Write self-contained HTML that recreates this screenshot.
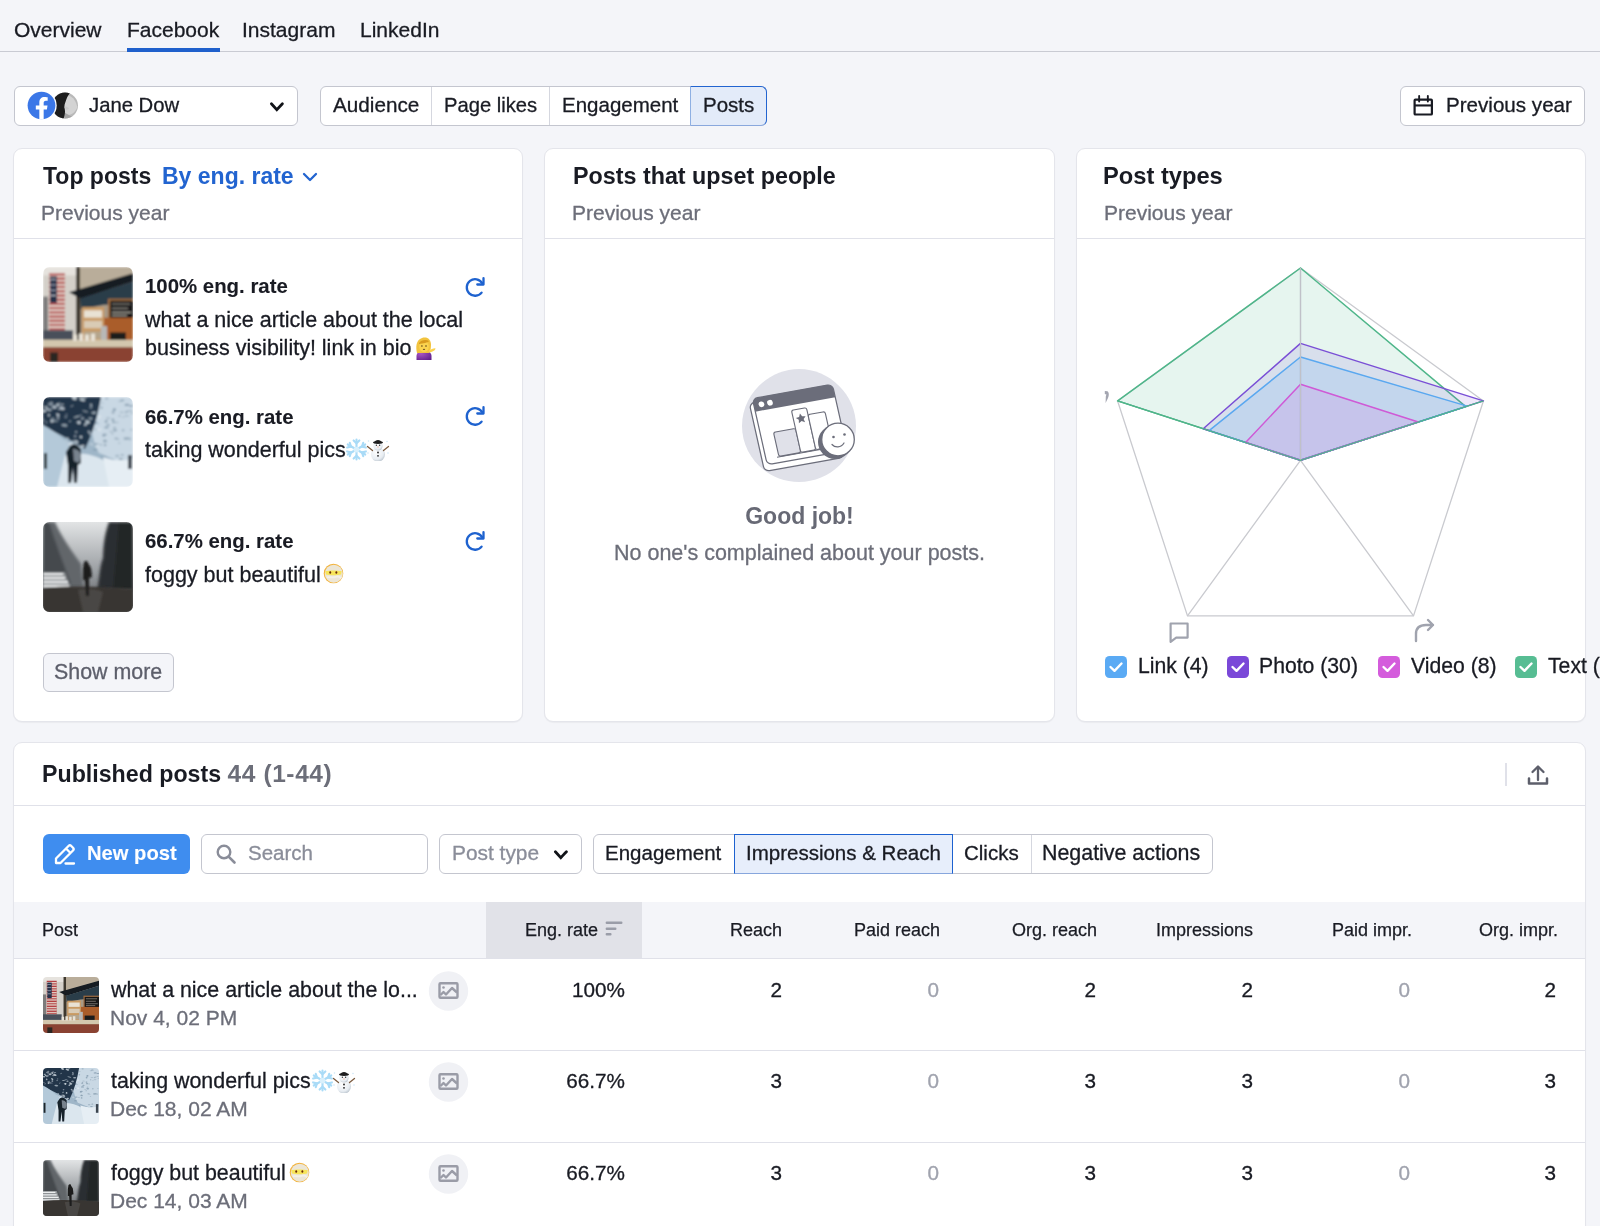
<!DOCTYPE html>
<html><head><meta charset="utf-8">
<style>
*{box-sizing:border-box;margin:0;padding:0}
html,body{width:1600px;height:1226px;overflow:hidden;background:#f4f5f9;font-family:"Liberation Sans",sans-serif;color:#191b23}
.a{position:absolute;white-space:nowrap;will-change:transform}
.t{font-size:20.5px;line-height:24px;-webkit-text-stroke:.3px currentColor}
.b{-webkit-text-stroke:.1px currentColor}
.h{font-size:23px;line-height:28px;font-weight:700}
.b{font-weight:700}
.g{color:#6c6e79}
.card{position:absolute;background:#fff;border:1px solid #e4e5eb;border-radius:9px;box-shadow:0 1px 1px rgba(25,27,35,.04)}
.hr{position:absolute;height:1px;background:#e0e1e9}
.box{position:absolute;border:1px solid #c4c6cf;border-radius:6px;background:#fff}
.vd{position:absolute;width:1px;background:#d5d7df}
.thumb{position:absolute;border-radius:7px;overflow:hidden}
svg{position:absolute;overflow:visible}
</style></head>
<body>
<!-- tabs -->
<div class="a t" style="left:14px;top:18px;font-size:21px">Overview</div>
<div class="a t" style="left:127px;top:18px;font-size:21px">Facebook</div>
<div class="a t" style="left:242px;top:18px;font-size:21px">Instagram</div>
<div class="a t" style="left:360px;top:18px;font-size:21px">LinkedIn</div>
<div class="hr" style="left:0;top:51px;width:1600px;background:#c9cbd3"></div>
<div class="a" style="left:127px;top:48px;width:93px;height:4px;background:#1f60cc"></div>

<!-- account select -->
<div class="box" style="left:14px;top:86px;width:284px;height:40px"></div>
<svg style="left:50px;top:92px" width="28" height="28" viewBox="0 0 28 28">
  <defs><clipPath id="av"><circle cx="15" cy="13.6" r="13"/></clipPath></defs>
  <g clip-path="url(#av)">
   <rect width="28" height="28" fill="#b9b9b9"/>
   <path d="M14 3 C19 2 24 6 26 11 L27.5 15 C26 19 23 22 19 23 C16 22 13 19 12 16 C12 11 12 7 14 3 Z" fill="#d3d3d3"/>
   <path d="M15 21 C18 23 21 24 25 26 L24 28 H14 Z" fill="#a4a4a4"/>
   <path d="M0 0 H21 C19 2 17.5 4 16.5 7 C15.5 10 14 13 14.5 16 C15.5 19 15 24 13 28 H0 Z" fill="#1d1d1d"/>
   <path d="M14.5 15 C16 14 18 15 19 17 L16 18 Z" fill="#c7c7c7"/>
  </g>
</svg>
<svg style="left:26px;top:90px" width="31" height="31" viewBox="-60 -60 1144 1144">
  <circle cx="512" cy="512" r="560" fill="#fff"/>
  <circle cx="512" cy="512" r="512" fill="#3b77e7"/>
  <path d="M711.3,660,734,512H592V415.96C592,375.47,611.84,336,675.44,336H740V210s-58.59-10-114.61-10C508.44,200,432,270.88,432,399.2V512H302V660H432v357.78a517.396,517.396,0,0,0,160,0V660Z" fill="#fff"/>
</svg>
<div class="a t" style="left:89px;top:93px;font-size:20.3px">Jane Dow</div>
<svg style="left:268px;top:101px" width="18" height="12" viewBox="0 0 18 12">
  <path d="M3.4 2.8 L8.8 8.6 L14.4 2.8" fill="none" stroke="#111318" stroke-width="2.8" stroke-linecap="round" stroke-linejoin="miter"/>
</svg>

<!-- segmented -->
<div class="box" style="left:320px;top:86px;width:447px;height:40px"></div>
<div class="vd" style="left:431px;top:87px;height:38px"></div>
<div class="vd" style="left:549px;top:87px;height:38px"></div>
<div class="a" style="left:690px;top:86px;width:77px;height:40px;background:#e3ebf9;border:1px solid #2264d0;border-color:#2264d0 #2264d0 #8aa8dd #8fb0e3;border-radius:0 6px 6px 0"></div>
<div class="a t" style="left:333px;top:93px;font-size:20.7px">Audience</div>
<div class="a t" style="left:444px;top:93px;font-size:20.2px">Page likes</div>
<div class="a t" style="left:562px;top:93px;font-size:20.5px">Engagement</div>
<div class="a t" style="left:703px;top:93px;font-size:20.5px">Posts</div>

<!-- previous year btn -->
<div class="box" style="left:1400px;top:86px;width:185px;height:40px"></div>
<svg style="left:1412px;top:93px" width="24" height="24" viewBox="0 0 24 24">
  <rect x="2.6" y="6.6" width="17.3" height="14.9" rx=".8" fill="none" stroke="#191b23" stroke-width="2.2"/>
  <rect x="2.6" y="11.4" width="17.3" height="2.1" fill="#191b23"/>
  <rect x="6.2" y="2" width="1.9" height="7.5" rx=".9" fill="#191b23"/>
  <rect x="14.9" y="2" width="1.9" height="7.5" rx=".9" fill="#191b23"/>
</svg>
<div class="a t" style="left:1446px;top:93px;font-size:20.6px">Previous year</div>

<!-- cards -->
<div class="card" style="left:13px;top:148px;width:510px;height:574px"></div>
<div class="card" style="left:544px;top:148px;width:511px;height:574px"></div>
<div class="card" style="left:1076px;top:148px;width:510px;height:574px"></div>
<div class="card" style="left:13px;top:742px;width:1573px;height:500px"></div>
<svg width="0" height="0" style="position:absolute"><defs>
<filter id="soft" x="-5%" y="-5%" width="110%" height="110%"><feGaussianBlur stdDeviation="0.9"/></filter>
<filter id="soft2" x="-5%" y="-5%" width="110%" height="110%"><feGaussianBlur stdDeviation="1.6"/></filter>
<pattern id="stripes" width="90" height="4" patternUnits="userSpaceOnUse"><rect width="90" height="2" fill="#e3d9d0"/></pattern>
<linearGradient id="fog" x1="0" y1="0" x2="0" y2="1"><stop offset="0" stop-color="#e2e4e5"/><stop offset=".55" stop-color="#9a9ea2"/><stop offset="1" stop-color="#55585b"/></linearGradient>
<linearGradient id="snowpath" x1="0" y1="0" x2="1" y2="1"><stop offset="0" stop-color="#a8bfd0"/><stop offset="1" stop-color="#e6eef4"/></linearGradient>
<symbol id="th1" viewBox="0 0 90 90" preserveAspectRatio="none">
  <clipPath id="c1"><rect width="90" height="90" rx="6.5"/></clipPath>
  <g clip-path="url(#c1)"><g filter="url(#soft)">
   <rect width="90" height="90" fill="#a89a86"/>
   <rect x="0" y="0" width="36" height="72" fill="#d4d0c9"/>
   <rect x="0" y="0" width="36" height="8" fill="#e6e3de"/>
   <rect x="0" y="28" width="5" height="40" fill="#7d7c7b"/>
   <rect x="33" y="0" width="4.5" height="72" fill="#3d372f"/>
   <rect x="37" y="0" width="53" height="22" fill="#b9ad9a"/>
   <rect x="6" y="6" width="16" height="56" fill="#b13a3c"/>
   <rect x="6" y="6" width="16" height="56" fill="url(#stripes)"/>
   <rect x="7" y="9" width="7" height="25" fill="#26304a"/>
   <path d="M7 12 H13 M7 17 H13 M7 22 H13 M7 27 H13" stroke="#c9ccd6" stroke-width=".9"/>
   <path d="M26 24 L90 6 L90 14 L38 30 Z" fill="#121a22"/>
   <path d="M37 30 L90 14 L90 34 L60 36 L38 40 Z" fill="#2a3c4a"/>
   <rect x="39" y="38" width="22" height="34" fill="#c99a63"/>
   <rect x="41" y="41" width="18" height="7" fill="#e9e2d4"/>
   <rect x="41" y="51" width="18" height="7" fill="#d9cbb5"/>
   <rect x="41" y="61" width="18" height="7" fill="#b5a58c"/>
   <rect x="65" y="30" width="25" height="20" fill="#9b6a3f"/>
   <rect x="67" y="32" width="23" height="17" fill="#151616"/>
   <path d="M69 35 H87 M69 39 H85 M69 43 H88 M69 46 H84" stroke="#a9a49a" stroke-width="1"/>
   <rect x="61" y="48" width="29" height="26" fill="#aa5d2c"/>
   <rect x="58" y="56" width="6" height="18" fill="#b8b8b6"/>
   <rect x="67" y="62" width="16" height="13" fill="#1c1c1c"/>
   <rect x="0" y="60" width="30" height="9" fill="#48505a"/>
   <rect x="0" y="69" width="90" height="7" fill="#d3c7ae"/>
   <path d="M30 64 h4 v6 h-4 Z M36 63 h4 v7 h-4 Z M42 64 h4 v6 h-4 Z M48 63 h4 v7 h-4 Z" fill="#e8e2d6"/>
   <rect x="0" y="76" width="90" height="14" fill="#8a4330"/>
   <rect x="7" y="81" width="8" height="9" fill="#2b2522"/>
  </g></g>
</symbol>
<symbol id="th2" viewBox="0 0 90 90" preserveAspectRatio="none">
  <clipPath id="c2"><rect width="90" height="90" rx="6.5"/></clipPath>
  <g clip-path="url(#c2)"><g filter="url(#soft)">
   <rect width="90" height="90" fill="#9fb6c8"/>
   <path d="M50 0 H90 V70 C80 66 66 60 56 56 C48 42 46 20 50 0 Z" fill="#c9d8e4"/>
   <ellipse cx="63.8" cy="23.5" rx="1.0" ry="0.8" fill="#5f7a90" opacity="0.42"/><ellipse cx="71.1" cy="13.3" rx="1.8" ry="0.5" fill="#5f7a90" opacity="0.34"/><ellipse cx="55.4" cy="26.4" rx="1.1" ry="0.5" fill="#5f7a90" opacity="0.36"/><ellipse cx="60.8" cy="38.6" rx="1.8" ry="1.1" fill="#5f7a90" opacity="0.48"/><ellipse cx="79.2" cy="58.0" rx="1.6" ry="0.8" fill="#5f7a90" opacity="0.59"/><ellipse cx="57.7" cy="47.8" rx="2.0" ry="0.5" fill="#5f7a90" opacity="0.54"/><ellipse cx="85.9" cy="41.4" rx="2.2" ry="1.1" fill="#5f7a90" opacity="0.30"/><ellipse cx="71.9" cy="33.3" rx="2.3" ry="1.1" fill="#5f7a90" opacity="0.54"/><ellipse cx="74.2" cy="58.9" rx="2.1" ry="1.1" fill="#5f7a90" opacity="0.33"/><ellipse cx="53.2" cy="8.8" rx="1.6" ry="0.6" fill="#5f7a90" opacity="0.54"/><ellipse cx="73.2" cy="41.4" rx="2.0" ry="1.0" fill="#5f7a90" opacity="0.42"/><ellipse cx="52.1" cy="52.6" rx="2.2" ry="0.9" fill="#5f7a90" opacity="0.44"/><ellipse cx="77.1" cy="4.4" rx="2.2" ry="0.7" fill="#5f7a90" opacity="0.28"/><ellipse cx="62.1" cy="48.1" rx="1.3" ry="1.1" fill="#5f7a90" opacity="0.59"/><ellipse cx="70.8" cy="25.2" rx="1.8" ry="1.0" fill="#5f7a90" opacity="0.52"/><ellipse cx="75.4" cy="42.4" rx="1.1" ry="0.6" fill="#5f7a90" opacity="0.34"/><ellipse cx="80.2" cy="20.1" rx="1.9" ry="0.5" fill="#5f7a90" opacity="0.27"/><ellipse cx="62.2" cy="44.4" rx="2.1" ry="1.0" fill="#5f7a90" opacity="0.35"/><ellipse cx="71.6" cy="30.7" rx="1.7" ry="0.6" fill="#5f7a90" opacity="0.56"/><ellipse cx="59.6" cy="64.6" rx="2.5" ry="0.5" fill="#5f7a90" opacity="0.41"/><ellipse cx="83.2" cy="63.9" rx="1.7" ry="0.7" fill="#5f7a90" opacity="0.32"/><ellipse cx="87.9" cy="13.9" rx="1.9" ry="0.6" fill="#5f7a90" opacity="0.43"/><ellipse cx="88.2" cy="8.8" rx="2.3" ry="0.9" fill="#5f7a90" opacity="0.56"/><ellipse cx="78.7" cy="15.3" rx="2.4" ry="0.9" fill="#5f7a90" opacity="0.26"/><ellipse cx="52.1" cy="32.5" rx="1.7" ry="0.7" fill="#5f7a90" opacity="0.30"/><ellipse cx="65.1" cy="20.9" rx="2.3" ry="0.5" fill="#5f7a90" opacity="0.51"/><ellipse cx="83.9" cy="7.9" rx="2.5" ry="1.1" fill="#5f7a90" opacity="0.57"/><ellipse cx="63.0" cy="24.6" rx="1.6" ry="1.3" fill="#5f7a90" opacity="0.46"/><ellipse cx="65.7" cy="28.3" rx="1.4" ry="0.5" fill="#5f7a90" opacity="0.29"/><ellipse cx="83.7" cy="18.9" rx="2.5" ry="0.7" fill="#5f7a90" opacity="0.34"/><ellipse cx="71.4" cy="12.5" rx="1.6" ry="1.3" fill="#5f7a90" opacity="0.56"/><ellipse cx="82.9" cy="41.6" rx="2.5" ry="1.3" fill="#5f7a90" opacity="0.44"/><ellipse cx="79.3" cy="3.3" rx="2.2" ry="0.9" fill="#5f7a90" opacity="0.51"/><ellipse cx="76.5" cy="18.9" rx="1.1" ry="1.2" fill="#5f7a90" opacity="0.29"/><ellipse cx="69.9" cy="22.7" rx="1.5" ry="1.1" fill="#5f7a90" opacity="0.59"/><ellipse cx="61.9" cy="43.3" rx="1.5" ry="0.9" fill="#5f7a90" opacity="0.39"/><ellipse cx="58.4" cy="10.7" rx="1.3" ry="1.2" fill="#5f7a90" opacity="0.42"/><ellipse cx="60.4" cy="59.8" rx="2.6" ry="0.9" fill="#5f7a90" opacity="0.30"/><ellipse cx="59.3" cy="6.0" rx="1.5" ry="0.6" fill="#5f7a90" opacity="0.33"/><ellipse cx="61.8" cy="37.6" rx="2.4" ry="1.1" fill="#5f7a90" opacity="0.39"/><ellipse cx="67.7" cy="34.6" rx="1.6" ry="0.8" fill="#5f7a90" opacity="0.27"/><ellipse cx="62.5" cy="63.9" rx="1.2" ry="0.9" fill="#5f7a90" opacity="0.47"/><ellipse cx="84.8" cy="14.3" rx="1.4" ry="0.7" fill="#5f7a90" opacity="0.39"/><ellipse cx="68.9" cy="63.0" rx="2.4" ry="1.2" fill="#5f7a90" opacity="0.26"/><ellipse cx="53.2" cy="46.8" rx="2.4" ry="0.9" fill="#5f7a90" opacity="0.46"/><ellipse cx="52.0" cy="25.8" rx="2.5" ry="1.2" fill="#5f7a90" opacity="0.55"/><ellipse cx="88.9" cy="16.4" rx="1.2" ry="0.6" fill="#5f7a90" opacity="0.43"/><ellipse cx="77.9" cy="62.1" rx="2.2" ry="1.0" fill="#5f7a90" opacity="0.52"/><ellipse cx="69.4" cy="36.4" rx="1.1" ry="1.1" fill="#5f7a90" opacity="0.33"/><ellipse cx="87.0" cy="42.6" rx="1.5" ry="0.6" fill="#5f7a90" opacity="0.34"/><ellipse cx="76.2" cy="46.1" rx="1.2" ry="0.6" fill="#5f7a90" opacity="0.43"/><ellipse cx="74.1" cy="25.6" rx="1.4" ry="1.0" fill="#5f7a90" opacity="0.25"/><ellipse cx="63.5" cy="30.4" rx="2.5" ry="1.0" fill="#5f7a90" opacity="0.56"/><ellipse cx="70.1" cy="15.5" rx="1.4" ry="1.3" fill="#5f7a90" opacity="0.50"/><ellipse cx="63.7" cy="1.4" rx="1.8" ry="1.0" fill="#5f7a90" opacity="0.40"/><ellipse cx="61.8" cy="44.0" rx="2.5" ry="0.7" fill="#5f7a90" opacity="0.26"/><ellipse cx="64.8" cy="27.8" rx="2.1" ry="0.7" fill="#5f7a90" opacity="0.53"/><ellipse cx="80.1" cy="33.3" rx="1.3" ry="1.3" fill="#5f7a90" opacity="0.36"/><ellipse cx="83.2" cy="15.2" rx="1.4" ry="1.1" fill="#5f7a90" opacity="0.35"/><ellipse cx="88.2" cy="32.7" rx="1.3" ry="0.7" fill="#5f7a90" opacity="0.40"/>
   <path d="M0 0 H58 C55 18 50 36 42 52 C32 46 16 36 0 30 Z" fill="#23364a"/>
   <ellipse cx="18.8" cy="7.5" rx="2.5" ry="0.7" transform="rotate(-8 18.8 7.5)" fill="#dfe8ee" opacity="0.59"/><ellipse cx="3.4" cy="25.4" rx="1.3" ry="1.0" transform="rotate(-25 3.4 25.4)" fill="#dfe8ee" opacity="0.38"/><ellipse cx="24.6" cy="41.3" rx="1.4" ry="0.8" transform="rotate(27 24.6 41.3)" fill="#dfe8ee" opacity="0.63"/><ellipse cx="33.5" cy="19.8" rx="3.2" ry="0.6" transform="rotate(-13 33.5 19.8)" fill="#dfe8ee" opacity="0.74"/><ellipse cx="8.4" cy="5.9" rx="1.8" ry="1.4" transform="rotate(5 8.4 5.9)" fill="#dfe8ee" opacity="0.43"/><ellipse cx="37.1" cy="18.6" rx="2.3" ry="0.7" transform="rotate(-18 37.1 18.6)" fill="#dfe8ee" opacity="0.38"/><ellipse cx="39.5" cy="21.4" rx="1.8" ry="1.2" transform="rotate(-12 39.5 21.4)" fill="#dfe8ee" opacity="0.55"/><ellipse cx="46.1" cy="34.9" rx="1.7" ry="1.2" transform="rotate(23 46.1 34.9)" fill="#dfe8ee" opacity="0.59"/><ellipse cx="42.3" cy="14.4" rx="3.2" ry="0.7" transform="rotate(15 42.3 14.4)" fill="#dfe8ee" opacity="0.54"/><ellipse cx="8.8" cy="24.4" rx="1.3" ry="1.3" transform="rotate(4 8.8 24.4)" fill="#dfe8ee" opacity="0.69"/><ellipse cx="50.8" cy="15.7" rx="2.6" ry="1.2" transform="rotate(-3 50.8 15.7)" fill="#dfe8ee" opacity="0.61"/><ellipse cx="48.7" cy="47.2" rx="2.1" ry="1.3" transform="rotate(12 48.7 47.2)" fill="#dfe8ee" opacity="0.38"/><ellipse cx="37.5" cy="49.7" rx="2.8" ry="0.9" transform="rotate(10 37.5 49.7)" fill="#dfe8ee" opacity="0.52"/><ellipse cx="1.3" cy="23.1" rx="1.5" ry="0.7" transform="rotate(16 1.3 23.1)" fill="#dfe8ee" opacity="0.38"/><ellipse cx="7.5" cy="12.4" rx="2.0" ry="1.5" transform="rotate(-3 7.5 12.4)" fill="#dfe8ee" opacity="0.39"/><ellipse cx="31.9" cy="44.2" rx="2.8" ry="1.5" transform="rotate(-5 31.9 44.2)" fill="#dfe8ee" opacity="0.48"/><ellipse cx="20.8" cy="44.2" rx="3.1" ry="0.8" transform="rotate(-16 20.8 44.2)" fill="#dfe8ee" opacity="0.43"/><ellipse cx="13.5" cy="24.2" rx="2.4" ry="0.9" transform="rotate(-5 13.5 24.2)" fill="#dfe8ee" opacity="0.35"/><ellipse cx="21.4" cy="28.3" rx="3.1" ry="1.3" transform="rotate(7 21.4 28.3)" fill="#dfe8ee" opacity="0.58"/><ellipse cx="39.2" cy="2.7" rx="3.0" ry="1.4" transform="rotate(18 39.2 2.7)" fill="#dfe8ee" opacity="0.74"/><ellipse cx="22.8" cy="19.9" rx="1.4" ry="1.2" transform="rotate(-26 22.8 19.9)" fill="#dfe8ee" opacity="0.38"/><ellipse cx="12.1" cy="8.1" rx="1.9" ry="0.7" transform="rotate(-21 12.1 8.1)" fill="#dfe8ee" opacity="0.35"/><ellipse cx="5.9" cy="18.2" rx="1.3" ry="1.5" transform="rotate(-21 5.9 18.2)" fill="#dfe8ee" opacity="0.63"/><ellipse cx="14.6" cy="17.4" rx="1.9" ry="0.7" transform="rotate(30 14.6 17.4)" fill="#dfe8ee" opacity="0.73"/><ellipse cx="27.0" cy="24.2" rx="1.4" ry="0.7" transform="rotate(-14 27.0 24.2)" fill="#dfe8ee" opacity="0.50"/><ellipse cx="48.1" cy="8.1" rx="1.2" ry="1.6" transform="rotate(-21 48.1 8.1)" fill="#dfe8ee" opacity="0.59"/><ellipse cx="31.5" cy="1.4" rx="2.3" ry="1.6" transform="rotate(12 31.5 1.4)" fill="#dfe8ee" opacity="0.74"/><ellipse cx="15.1" cy="18.3" rx="1.5" ry="1.4" transform="rotate(17 15.1 18.3)" fill="#dfe8ee" opacity="0.59"/><ellipse cx="19.1" cy="11.2" rx="2.8" ry="1.6" transform="rotate(18 19.1 11.2)" fill="#dfe8ee" opacity="0.73"/><ellipse cx="47.5" cy="37.0" rx="1.7" ry="1.1" transform="rotate(-28 47.5 37.0)" fill="#dfe8ee" opacity="0.51"/><ellipse cx="1.6" cy="14.0" rx="1.7" ry="1.3" transform="rotate(-3 1.6 14.0)" fill="#dfe8ee" opacity="0.78"/><ellipse cx="54.3" cy="49.4" rx="3.1" ry="1.0" transform="rotate(-16 54.3 49.4)" fill="#dfe8ee" opacity="0.45"/><ellipse cx="11.4" cy="10.2" rx="2.4" ry="1.5" transform="rotate(-1 11.4 10.2)" fill="#dfe8ee" opacity="0.73"/><ellipse cx="37.9" cy="40.0" rx="1.4" ry="1.3" transform="rotate(17 37.9 40.0)" fill="#dfe8ee" opacity="0.76"/><ellipse cx="43.5" cy="23.9" rx="1.6" ry="1.4" transform="rotate(18 43.5 23.9)" fill="#dfe8ee" opacity="0.50"/><ellipse cx="56.4" cy="19.8" rx="2.0" ry="1.5" transform="rotate(-20 56.4 19.8)" fill="#dfe8ee" opacity="0.68"/><ellipse cx="7.4" cy="7.6" rx="3.0" ry="1.4" transform="rotate(20 7.4 7.6)" fill="#dfe8ee" opacity="0.42"/><ellipse cx="56.9" cy="32.9" rx="1.9" ry="1.1" transform="rotate(-29 56.9 32.9)" fill="#dfe8ee" opacity="0.41"/><ellipse cx="56.3" cy="32.5" rx="2.3" ry="1.5" transform="rotate(22 56.3 32.5)" fill="#dfe8ee" opacity="0.55"/><ellipse cx="47.9" cy="10.6" rx="1.7" ry="0.9" transform="rotate(5 47.9 10.6)" fill="#dfe8ee" opacity="0.46"/><ellipse cx="15.0" cy="21.0" rx="1.5" ry="1.5" transform="rotate(-3 15.0 21.0)" fill="#dfe8ee" opacity="0.51"/><ellipse cx="33.8" cy="45.2" rx="2.0" ry="1.5" transform="rotate(2 33.8 45.2)" fill="#dfe8ee" opacity="0.58"/><ellipse cx="30.4" cy="0.9" rx="2.1" ry="0.8" transform="rotate(18 30.4 0.9)" fill="#dfe8ee" opacity="0.35"/><ellipse cx="10.0" cy="23.7" rx="2.7" ry="1.2" transform="rotate(1 10.0 23.7)" fill="#dfe8ee" opacity="0.50"/><ellipse cx="32.2" cy="39.2" rx="1.4" ry="1.2" transform="rotate(-13 32.2 39.2)" fill="#dfe8ee" opacity="0.46"/><ellipse cx="44.8" cy="25.4" rx="2.3" ry="1.4" transform="rotate(-3 44.8 25.4)" fill="#dfe8ee" opacity="0.76"/><ellipse cx="35.5" cy="25.3" rx="2.2" ry="1.3" transform="rotate(2 35.5 25.3)" fill="#dfe8ee" opacity="0.55"/><ellipse cx="27.7" cy="47.1" rx="2.6" ry="1.5" transform="rotate(-14 27.7 47.1)" fill="#dfe8ee" opacity="0.77"/><ellipse cx="32.5" cy="47.2" rx="2.9" ry="0.7" transform="rotate(-3 32.5 47.2)" fill="#dfe8ee" opacity="0.40"/><ellipse cx="4.2" cy="12.0" rx="1.3" ry="1.3" transform="rotate(24 4.2 12.0)" fill="#dfe8ee" opacity="0.70"/><ellipse cx="9.0" cy="35.8" rx="2.5" ry="0.7" transform="rotate(28 9.0 35.8)" fill="#dfe8ee" opacity="0.75"/><ellipse cx="12.7" cy="47.6" rx="2.0" ry="1.1" transform="rotate(20 12.7 47.6)" fill="#dfe8ee" opacity="0.80"/><ellipse cx="9.4" cy="21.6" rx="2.2" ry="0.9" transform="rotate(-11 9.4 21.6)" fill="#dfe8ee" opacity="0.44"/><ellipse cx="41.9" cy="1.0" rx="2.3" ry="1.0" transform="rotate(-10 41.9 1.0)" fill="#dfe8ee" opacity="0.36"/><ellipse cx="36.2" cy="25.6" rx="1.3" ry="1.6" transform="rotate(28 36.2 25.6)" fill="#dfe8ee" opacity="0.70"/><ellipse cx="6.1" cy="13.3" rx="1.3" ry="1.4" transform="rotate(-22 6.1 13.3)" fill="#dfe8ee" opacity="0.47"/><ellipse cx="24.5" cy="45.6" rx="2.8" ry="0.9" transform="rotate(25 24.5 45.6)" fill="#dfe8ee" opacity="0.42"/><ellipse cx="33.1" cy="35.0" rx="1.4" ry="0.7" transform="rotate(-4 33.1 35.0)" fill="#dfe8ee" opacity="0.66"/><ellipse cx="4.2" cy="46.9" rx="2.5" ry="1.4" transform="rotate(21 4.2 46.9)" fill="#dfe8ee" opacity="0.39"/><ellipse cx="3.9" cy="43.1" rx="2.1" ry="0.9" transform="rotate(26 3.9 43.1)" fill="#dfe8ee" opacity="0.60"/><ellipse cx="15.5" cy="6.5" rx="2.3" ry="0.8" transform="rotate(-20 15.5 6.5)" fill="#dfe8ee" opacity="0.40"/><ellipse cx="2.9" cy="10.1" rx="1.8" ry="0.9" transform="rotate(-13 2.9 10.1)" fill="#dfe8ee" opacity="0.69"/><ellipse cx="29.0" cy="8.9" rx="1.9" ry="0.6" transform="rotate(-29 29.0 8.9)" fill="#dfe8ee" opacity="0.46"/><ellipse cx="42.5" cy="27.6" rx="1.6" ry="1.1" transform="rotate(-24 42.5 27.6)" fill="#dfe8ee" opacity="0.77"/><ellipse cx="47.5" cy="21.6" rx="2.2" ry="1.4" transform="rotate(0 47.5 21.6)" fill="#dfe8ee" opacity="0.53"/><ellipse cx="39.9" cy="49.1" rx="1.9" ry="1.4" transform="rotate(8 39.9 49.1)" fill="#dfe8ee" opacity="0.67"/><ellipse cx="23.5" cy="17.4" rx="1.3" ry="0.7" transform="rotate(14 23.5 17.4)" fill="#dfe8ee" opacity="0.38"/><ellipse cx="14.8" cy="8.2" rx="1.4" ry="1.4" transform="rotate(10 14.8 8.2)" fill="#dfe8ee" opacity="0.74"/><ellipse cx="16.4" cy="12.1" rx="1.8" ry="1.1" transform="rotate(-3 16.4 12.1)" fill="#dfe8ee" opacity="0.42"/><ellipse cx="15.3" cy="48.1" rx="3.1" ry="1.1" transform="rotate(28 15.3 48.1)" fill="#dfe8ee" opacity="0.46"/>
   <path d="M0 28 C12 34 24 44 32 56 L28 90 H0 Z" fill="#b4c9d9"/>
   <path d="M22 58 C38 54 52 58 62 64 C72 70 82 72 90 72 V90 H14 Z" fill="#dbe6ee"/>
   <path d="M60 60 C70 64 80 64 90 62 V90 H66 Z" fill="#e6eef4"/>
   <rect x="1" y="56" width="3" height="16" fill="#1e252c"/>
   <rect x="85" y="58" width="4" height="14" fill="#3a4450"/>
   <path d="M25 52 C27 47 32 46 35 49 L38 52 L38 66 L35 68 L34 86 L31 86 L30 70 L28 86 L25 86 L25 68 L23 55 Z" fill="#18202b"/>
   <path d="M30 52 C34 52 38 54 38 60 L36 66 L31 64 Z" fill="#78838e"/>
  </g></g>
</symbol>
<symbol id="th3" viewBox="0 0 90 90" preserveAspectRatio="none">
  <clipPath id="c3"><rect width="90" height="90" rx="6.5"/></clipPath>
  <g clip-path="url(#c3)">
   <rect width="90" height="90" fill="url(#fog)"/>
   <g filter="url(#soft2)">
   <path d="M0 0 H12 C18 14 28 28 38 42 L40 66 H0 Z" fill="#62666a"/>
   <path d="M0 0 H6 C12 20 20 40 28 62 H0 Z" fill="#45494d"/>
   <path d="M66 0 H90 V68 H54 C57 56 56 46 60 36 C60 24 62 10 66 0 Z" fill="#2c2f32"/>
   <path d="M76 0 H90 V68 H70 Z" fill="#232628"/>
   </g>
   <g filter="url(#soft)">
   <path d="M0 50 H22 L28 66 H0 Z" fill="#8f9396"/>
   <path d="M0 52 H20 M0 56 H22 M0 60 H25 M0 64 H26" stroke="#eceeef" stroke-width="2.2"/>
   <path d="M0 66 C30 63 60 65 90 67 V90 H0 Z" fill="#393531"/>
   <path d="M35 68 C42 66 52 66 60 70 L55 90 H40 Z" fill="#4a4744"/>
   <path d="M41 40 C43 38 45 39 45 41 L48 46 L49 55 L46 56 L46 74 L43 74 L42 58 L40 58 L40 47 Z" fill="#1a1a1a"/>
   </g>
  </g>
</symbol>
</defs></svg>
<svg width="0" height="0" style="position:absolute"><defs>
<radialGradient id="snowg" cx=".4" cy=".35" r=".7"><stop offset="0" stop-color="#ffffff"/><stop offset=".7" stop-color="#e8edf2"/><stop offset="1" stop-color="#b9c3cc"/></radialGradient>
<radialGradient id="purg" cx=".3" cy=".3" r=".9"><stop offset="0" stop-color="#a755c2"/><stop offset="1" stop-color="#5e1d8a"/></radialGradient>
<symbol id="em1" viewBox="0 0 24 24">
  <path d="M3.5 24 V20 C3.5 17 6 15 11 15 C16 15 18.5 17 18.5 20 V24 Z" fill="url(#purg)"/>
  <path d="M4 17 C2.5 11 3 4 9 2 C14 0.5 18 3 18 9 C18 13 17 16 16 17 Z" fill="#f2c33e"/>
  <ellipse cx="11" cy="10.5" rx="4.8" ry="5.5" fill="#fbd34f"/>
  <path d="M6 7 C8 4 13 3 16 5 C15 7 10 7 6 8 Z" fill="#d99a1e"/>
  <circle cx="8.9" cy="10" r=".8" fill="#5a4015"/><circle cx="13" cy="10" r=".8" fill="#5a4015"/>
  <ellipse cx="11" cy="13.3" rx="1.2" ry=".6" fill="#6a4a20"/>
  <path d="M16 14.5 C18 13 20.5 12 22.5 12.2 L22 14 C20.5 15 18.5 16 17 16.5 Z" fill="#fbd34f"/>
</symbol>
<symbol id="em2" viewBox="0 0 24 24">
  <g stroke="#a9dbf7" stroke-width="2.2" stroke-linecap="round" fill="none">
   <path d="M12 1.5 V22.5 M2.9 6.75 L21.1 17.25 M2.9 17.25 L21.1 6.75"/>
   <path d="M9 2.5 L12 5.5 L15 2.5 M9 21.5 L12 18.5 L15 21.5 M2.2 10 L6.3 9 L5 5 M21.8 14 L17.7 15 L19 19 M2.2 14 L6.3 15 L5 19 M21.8 10 L17.7 9 L19 5"/>
  </g>
  <circle cx="12" cy="12" r="3" fill="#d9f0fc"/>
</symbol>
<symbol id="em3" viewBox="0 0 24 24">
  <circle cx="12" cy="17.5" r="7" fill="url(#snowg)"/>
  <circle cx="12" cy="9" r="4.6" fill="url(#snowg)"/>
  <path d="M8.5 5.5 C8.5 2 15.5 2 15.5 5.5 Z" fill="#1d1d1d"/>
  <ellipse cx="12" cy="5.6" rx="5" ry="1.3" fill="#1d1d1d"/>
  <circle cx="10.4" cy="8.3" r=".7" fill="#333"/><circle cx="13.6" cy="8.3" r=".7" fill="#333"/>
  <path d="M11.5 9.5 L12.5 9.5 L12 11 Z" fill="#e8663a"/>
  <path d="M1.5 9.5 L6.5 13.5 M22.5 9.5 L17.5 13.5" stroke="#7a5a3f" stroke-width="1.3" stroke-linecap="round"/>
  <circle cx="12" cy="15.5" r=".9" fill="#222"/><circle cx="12" cy="18.8" r=".9" fill="#222"/>
  <circle cx="2.5" cy="4" r=".8" fill="#cde6f6"/><circle cx="21" cy="4.5" r=".8" fill="#cde6f6"/><circle cx="22" cy="16" r=".8" fill="#cde6f6"/><circle cx="2" cy="16" r=".8" fill="#cde6f6"/>
</symbol>
<symbol id="em4" viewBox="0 0 24 24">
  <circle cx="12" cy="12" r="10.2" fill="#f2b23a"/>
  <circle cx="12.3" cy="12.2" r="9.4" fill="#ece6d6"/>
  <path d="M3.5 9.5 C7 8.5 17 8.5 20.5 9.5 L20 13 C16 14 8 14 4 13 Z" fill="#f7e55a"/>
  <ellipse cx="8.6" cy="11" rx="1" ry="1.3" fill="#6b2a0a"/><ellipse cx="15" cy="11" rx="1" ry="1.3" fill="#6b2a0a"/>
  <path d="M5 16 C8 15 11 17 14 15.5 C17 14.5 19 16 20 17" fill="none" stroke="#f4f0e6" stroke-width="2"/>
</symbol>
</defs></svg>
<!-- ===== card 1: top posts ===== -->
<div class="a h" style="left:43px;top:162px">Top posts</div>
<div class="a h" style="left:162px;top:162px;color:#2264d0">By eng. rate</div>
<svg style="left:301px;top:170px" width="18" height="14" viewBox="0 0 18 14">
  <path d="M3 4 L9 10 L15 4" fill="none" stroke="#2264d0" stroke-width="2.3" stroke-linecap="round" stroke-linejoin="round"/>
</svg>
<div class="a t g" style="left:41px;top:201px;font-size:21px">Previous year</div>
<div class="hr" style="left:14px;top:238px;width:508px"></div>

<!-- thumbs -->
<svg style="left:43px;top:267px" width="90" height="95" viewBox="0 0 90 90" preserveAspectRatio="none"><use href="#th1"/></svg>
<svg style="left:43px;top:397px" width="90" height="90" viewBox="0 0 90 90" preserveAspectRatio="none"><use href="#th2"/></svg>
<svg style="left:43px;top:522px" width="90" height="90" viewBox="0 0 90 90" preserveAspectRatio="none"><use href="#th3"/></svg>

<!-- post texts -->
<div class="a t b" style="left:145px;top:274px;font-size:20.4px">100% eng. rate</div>
<div class="a t" style="left:145px;top:308px;font-size:21.5px">what a nice article about the local</div>
<div class="a t" style="left:145px;top:336px;font-size:21.5px">business visibility! link in bio</div>
<div class="a t b" style="left:145px;top:405px;font-size:20.4px">66.7% eng. rate</div>
<div class="a t" style="left:145px;top:438px;font-size:21.5px">taking wonderful pics</div>
<div class="a t b" style="left:145px;top:529px;font-size:20.4px">66.7% eng. rate</div>
<div class="a t" style="left:145px;top:563px;font-size:21.5px">foggy but beautiful</div>

<!-- refresh icons -->
<svg style="left:463px;top:275px" width="24" height="24" viewBox="0 0 24 24">
  <path d="M19.2 8.2 A8.3 8.3 0 1 0 18.6 17.6" fill="none" stroke="#1e62cf" stroke-width="2.3" stroke-linecap="round"/>
  <path d="M20.5 3.2 V9.5 H14.3" fill="none" stroke="#1e62cf" stroke-width="2.3" stroke-linecap="round" stroke-linejoin="round"/>
</svg>
<svg style="left:463px;top:404px" width="24" height="24" viewBox="0 0 24 24">
  <path d="M19.2 8.2 A8.3 8.3 0 1 0 18.6 17.6" fill="none" stroke="#1e62cf" stroke-width="2.3" stroke-linecap="round"/>
  <path d="M20.5 3.2 V9.5 H14.3" fill="none" stroke="#1e62cf" stroke-width="2.3" stroke-linecap="round" stroke-linejoin="round"/>
</svg>
<svg style="left:463px;top:529px" width="24" height="24" viewBox="0 0 24 24">
  <path d="M19.2 8.2 A8.3 8.3 0 1 0 18.6 17.6" fill="none" stroke="#1e62cf" stroke-width="2.3" stroke-linecap="round"/>
  <path d="M20.5 3.2 V9.5 H14.3" fill="none" stroke="#1e62cf" stroke-width="2.3" stroke-linecap="round" stroke-linejoin="round"/>
</svg>

<!-- show more -->
<div class="a" style="left:43px;top:653px;width:131px;height:39px;background:#f4f5f9;border:1px solid #c4c6cf;border-radius:6px"></div>
<div class="a t" style="left:54px;top:660px;font-size:21.4px;color:#5d5f6b">Show more</div>
<!-- emojis -->
<svg style="left:413px;top:336px" width="24" height="24" viewBox="0 0 24 24"><use href="#em1"/></svg>
<svg style="left:345px;top:438px" width="23" height="23" viewBox="0 0 24 24"><use href="#em2"/></svg>
<svg style="left:366px;top:437px" width="24" height="24" viewBox="0 0 24 24"><use href="#em3"/></svg>
<svg style="left:322px;top:562px" width="23" height="23" viewBox="0 0 24 24"><use href="#em4"/></svg>
<!-- ===== card 2 ===== -->
<div class="a h" style="left:573px;top:162px;font-size:23.3px">Posts that upset people</div>
<div class="a t g" style="left:572px;top:201px;font-size:21px">Previous year</div>
<div class="hr" style="left:545px;top:238px;width:509px"></div>
<svg style="left:735px;top:362px" width="130" height="125" viewBox="0 0 130 125">
  <path d="M64 7 C95 7 121 33 121 64 C121 95 95 120 64 120 C33 120 7 95 7 64 C7 33 33 7 64 7 Z" fill="#e0e1e9"/>
  <g transform="matrix(0.999,-0.18,0.225,1.003,17.4,36.6)">
    <rect x="-4" y="4" width="80" height="68" rx="5" fill="#fff" stroke="#6b6d7a" stroke-width="1.2"/>
    <rect x="0" y="0" width="80" height="66" rx="5" fill="#fff" stroke="#6b6d7a" stroke-width="1.2"/>
    <path d="M0 13 V5 A5 5 0 0 1 5 0 H75 A5 5 0 0 1 80 5 V13 Z" fill="#6b6d7a"/>
    <circle cx="7.5" cy="7" r="2.8" fill="#fff"/><circle cx="16" cy="7" r="2.8" fill="#fff"/>
    <rect x="13" y="36" width="22" height="24" rx="2" fill="#e0e1e9" stroke="#6b6d7a" stroke-width="1.1"/>
    <rect x="35" y="18" width="15" height="42" rx="2" fill="#fff" stroke="#6b6d7a" stroke-width="1.1"/>
    <path d="M42.5 22.5 l1.5 3.1 3.4 .4 -2.5 2.3 .7 3.4 -3.1-1.7 -3.1 1.7 .7-3.4 -2.5-2.3 3.4-.4 Z" fill="#6b6d7a"/>
    <rect x="50" y="25" width="17" height="35" rx="2" fill="#fff" stroke="#6b6d7a" stroke-width="1.1"/>
    <path d="M11 60.5 H74" stroke="#6b6d7a" stroke-width="1.1"/>
  </g>
  <circle cx="100" cy="80" r="17" fill="#6b6d7a"/>
  <circle cx="103" cy="77.5" r="16.3" fill="#fff" stroke="#6b6d7a" stroke-width="1.3"/>
  <circle cx="98.5" cy="75" r="1.3" fill="#6b6d7a"/><circle cx="109.5" cy="72.5" r="1.3" fill="#6b6d7a"/>
  <path d="M97 82.5 C100 86 106 86 109 81" fill="none" stroke="#6b6d7a" stroke-width="1.2" stroke-linecap="round"/>
</svg>
<div class="a h" style="left:546px;top:502px;width:507px;text-align:center;color:#676975;font-size:23px">Good job!</div>
<div class="a t g" style="left:546px;top:541px;width:507px;text-align:center;font-size:21.5px">No one's complained about your posts.</div>

<!-- ===== card 3 ===== -->
<div class="a h" style="left:1103px;top:162px;font-size:23.7px">Post types</div>
<div class="a t g" style="left:1104px;top:201px;font-size:21px">Previous year</div>
<div class="hr" style="left:1077px;top:238px;width:508px"></div>
<svg style="left:0;top:0" width="1600" height="1226" viewBox="0 0 1600 1226">
  <g fill="none" stroke="#c9cacf" stroke-width="1.3">
    <path d="M1300.5 268.0 L1483.4 400.9 L1413.5 615.9 L1187.5 615.9 L1117.6 400.9 Z"/>
    <path d="M1300.5 460.3 L1300.5 268.0 M1300.5 460.3 L1483.4 400.9 M1300.5 460.3 L1413.5 615.9 M1300.5 460.3 L1187.5 615.9 M1300.5 460.3 L1117.6 400.9"/>
  </g>
  <path d="M1300.5 268.0 L1465.8 406.6 L1300.5 460.3 L1300.5 460.3 L1117.6 400.9 Z" fill="rgba(87,189,147,.15)" stroke="#4fb68a" stroke-width="1.5" stroke-linejoin="round"/>
  <path d="M1300.5 343.4 L1483.4 400.9 L1300.5 460.3 L1300.5 460.3 L1203.2 428.7 Z" fill="rgba(122,79,214,.13)" stroke="#7a4fd6" stroke-width="1.5" stroke-linejoin="round"/>
  <path d="M1300.5 357.0 L1467.3 406.1 L1300.5 460.3 L1300.5 460.3 L1209.1 430.6 Z" fill="rgba(90,168,240,.17)" stroke="#5aa8f0" stroke-width="1.5" stroke-linejoin="round"/>
  <path d="M1300.5 384.3 L1418.3 422.0 L1300.5 460.3 L1300.5 460.3 L1245.6 442.5 Z" fill="rgba(214,92,219,.15)" stroke="#cf5ad6" stroke-width="1.5" stroke-linejoin="round"/>
  <path d="M1300.5 460.3 L1300.5 268.0" stroke="#c0c1c8" stroke-width="1.2"/>
  <path d="M1117.6 400.9 L1300.5 460.3 L1483.4 400.9" fill="none" stroke="#4fb68a" stroke-width="1.2"/>
  <!-- axis icons -->
  <path d="M1104.8 391 L1107.5 391.3 C1109.2 392.5 1109.2 395.5 1108 398 L1105.6 403 L1105.8 396.5 L1106.4 394.6 L1104.8 394 Z" fill="#a3a5b0"/>
  <path d="M1170.6 623.5 H1187.6 V637.6 H1176.2 L1170.6 641.8 Z" fill="none" stroke="#a0a3ae" stroke-width="2.2" stroke-linejoin="round"/>
  <path d="M1416 641 V634 C1416 628 1420 625 1426 625 H1433 M1428 620 L1433 625 L1428 630" fill="none" stroke="#a0a3ae" stroke-width="2.4" stroke-linecap="round" stroke-linejoin="round"/>
</svg>
<!-- legend -->
<svg style="left:1104px;top:655px" width="24" height="24" viewBox="0 0 24 24"><rect x="1" y="1" width="22" height="22" rx="4.5" fill="#5aaaf4"/><path d="M6.5 12 L10.5 15.8 L17.5 8.5" fill="none" stroke="#fff" stroke-width="2.4" stroke-linecap="round" stroke-linejoin="round"/></svg>
<div class="a t" style="left:1138px;top:654px;font-size:21.2px">Link (4)</div>
<svg style="left:1226px;top:655px" width="24" height="24" viewBox="0 0 24 24"><rect x="1" y="1" width="22" height="22" rx="4.5" fill="#7a48d8"/><path d="M6.5 12 L10.5 15.8 L17.5 8.5" fill="none" stroke="#fff" stroke-width="2.4" stroke-linecap="round" stroke-linejoin="round"/></svg>
<div class="a t" style="left:1259px;top:654px;font-size:21.2px">Photo (30)</div>
<svg style="left:1377px;top:655px" width="24" height="24" viewBox="0 0 24 24"><rect x="1" y="1" width="22" height="22" rx="4.5" fill="#d45cdc"/><path d="M6.5 12 L10.5 15.8 L17.5 8.5" fill="none" stroke="#fff" stroke-width="2.4" stroke-linecap="round" stroke-linejoin="round"/></svg>
<div class="a t" style="left:1411px;top:654px;font-size:21.2px">Video (8)</div>
<svg style="left:1514px;top:655px" width="24" height="24" viewBox="0 0 24 24"><rect x="1" y="1" width="22" height="22" rx="4.5" fill="#57bd93"/><path d="M6.5 12 L10.5 15.8 L17.5 8.5" fill="none" stroke="#fff" stroke-width="2.4" stroke-linecap="round" stroke-linejoin="round"/></svg>
<div class="a t" style="left:1548px;top:654px;font-size:21.2px">Text (12)</div>
<!-- ===== bottom card ===== -->
<div class="a h" style="left:42px;top:760px;font-size:23.2px">Published posts <span style="color:#6c6e79;font-size:24.5px;letter-spacing:.6px">44 (1-44)</span></div>
<div class="a" style="left:1505px;top:763px;width:2px;height:23px;background:#e0e1e9"></div>
<svg style="left:1526px;top:763px" width="24" height="24" viewBox="0 0 24 24">
  <path d="M12 17 V4 M6.5 9 L12 3.5 L17.5 9" fill="none" stroke="#5d5f6b" stroke-width="2.3" stroke-linecap="round" stroke-linejoin="round"/>
  <path d="M3 15.5 V20.5 H21 V15.5" fill="none" stroke="#5d5f6b" stroke-width="2.5" stroke-linecap="round" stroke-linejoin="round"/>
</svg>
<div class="hr" style="left:14px;top:805px;width:1571px"></div>

<!-- toolbar -->
<div class="a" style="left:43px;top:834px;width:147px;height:40px;background:#3f8def;border-radius:6px"></div>
<svg style="left:52px;top:841px" width="26" height="26" viewBox="0 0 26 26">
  <path d="M4 22 V17.5 L16.5 5 A2 2 0 0 1 19.3 5 L21 6.7 A2 2 0 0 1 21 9.5 L8.5 22 Z M14 7.5 L18.5 12" fill="none" stroke="#fff" stroke-width="2.3" stroke-linejoin="round"/>
  <path d="M13.5 22.5 H22" stroke="#fff" stroke-width="2.3" stroke-linecap="round"/>
</svg>
<div class="a t b" style="left:87px;top:841px;color:#fff;font-size:20.2px">New post</div>

<div class="box" style="left:201px;top:834px;width:227px;height:40px"></div>
<svg style="left:213px;top:841px" width="26" height="26" viewBox="0 0 26 26">
  <circle cx="11" cy="11" r="6.3" fill="none" stroke="#8a8d99" stroke-width="2.4"/>
  <path d="M15.6 15.6 L21.5 21.5" stroke="#8a8d99" stroke-width="2.6" stroke-linecap="round"/>
</svg>
<div class="a t" style="left:248px;top:841px;color:#8a8d99;font-size:20.5px">Search</div>

<div class="box" style="left:439px;top:834px;width:143px;height:40px"></div>
<div class="a t" style="left:452px;top:841px;color:#8a8d99;font-size:20.9px">Post type</div>
<svg style="left:552px;top:849px" width="18" height="12" viewBox="0 0 18 12">
  <path d="M3.4 2.8 L8.8 8.6 L14.4 2.8" fill="none" stroke="#111318" stroke-width="2.8" stroke-linecap="round" stroke-linejoin="miter"/>
</svg>

<div class="box" style="left:593px;top:834px;width:620px;height:40px"></div>
<div class="a" style="left:734px;top:834px;width:219px;height:40px;background:#e7eefb;border:1px solid #1d62d0;border-bottom-color:#87a6dd"></div>
<div class="vd" style="left:1031px;top:835px;height:38px"></div>
<div class="a t" style="left:605px;top:841px;font-size:20.5px">Engagement</div>
<div class="a t" style="left:746px;top:841px;font-size:20.5px">Impressions &amp; Reach</div>
<div class="a t" style="left:964px;top:841px;font-size:20.5px">Clicks</div>
<div class="a t" style="left:1042px;top:841px;font-size:21.4px">Negative actions</div>

<!-- table header -->
<div class="a" style="left:14px;top:902px;width:1571px;height:57px;background:#f4f5f9"></div>
<div class="a" style="left:486px;top:902px;width:156px;height:57px;background:#e1e2e8"></div>
<div class="hr" style="left:14px;top:958px;width:1571px;background:#e0e1e9"></div>
<div class="a" style="left:42px;top:918px;font-size:18px;line-height:24px;-webkit-text-stroke:.25px currentColor">Post</div>
<div class="a" style="left:487px;top:918px;width:111px;text-align:right;font-size:18px;line-height:24px;-webkit-text-stroke:.25px currentColor">Eng. rate</div>
<svg style="left:603px;top:919px" width="22" height="20" viewBox="0 0 22 20">
  <path d="M3.8 3.8 H18.3 M3.8 9.8 H12.3 M3.8 15.2 H7.4" stroke="#9a9da8" stroke-width="2.4" stroke-linecap="round"/>
</svg>
<div class="a" style="left:642px;top:918px;width:140px;text-align:right;font-size:18px;line-height:24px;-webkit-text-stroke:.25px currentColor">Reach</div>
<div class="a" style="left:800px;top:918px;width:140px;text-align:right;font-size:18px;line-height:24px;-webkit-text-stroke:.25px currentColor">Paid reach</div>
<div class="a" style="left:957px;top:918px;width:140px;text-align:right;font-size:18px;line-height:24px;-webkit-text-stroke:.25px currentColor">Org. reach</div>
<div class="a" style="left:1113px;top:918px;width:140px;text-align:right;font-size:18px;line-height:24px;-webkit-text-stroke:.25px currentColor">Impressions</div>
<div class="a" style="left:1272px;top:918px;width:140px;text-align:right;font-size:18px;line-height:24px;-webkit-text-stroke:.25px currentColor">Paid impr.</div>
<div class="a" style="left:1418px;top:918px;width:140px;text-align:right;font-size:18px;line-height:24px;-webkit-text-stroke:.25px currentColor">Org. impr.</div>
<svg style="left:43px;top:977px" width="56" height="56" viewBox="0 0 90 90" preserveAspectRatio="none"><use href="#th1"/></svg>
<div class="a t" style="left:111px;top:978px;font-size:21.4px">what a nice article about the lo...</div>
<div class="a t g" style="left:110px;top:1006px;font-size:21px">Nov 4, 02 PM</div>
<svg style="left:428px;top:971px" width="41" height="41" viewBox="0 0 41 41"><circle cx="20.5" cy="20" r="19.7" fill="#f0f1f5"/><rect x="11.5" y="12.2" width="18" height="14.5" rx="1" fill="none" stroke="#9a9ca7" stroke-width="2.4"/><path d="M12.5 24 L15.5 21 L18 23.5 L24 17 L29 21.5" fill="none" stroke="#9a9ca7" stroke-width="2.4" stroke-linejoin="round"/><circle cx="15.5" cy="16.5" r="1.3" fill="#9a9ca7"/></svg>
<div class="a t" style="left:485px;top:978px;width:140px;text-align:right;font-size:20.7px">100%</div>
<div class="a t" style="left:682px;top:978px;width:100px;text-align:right;font-size:20.7px;color:#191b23">2</div>
<div class="a t" style="left:839px;top:978px;width:100px;text-align:right;font-size:20.7px;color:#a0a3ae">0</div>
<div class="a t" style="left:996px;top:978px;width:100px;text-align:right;font-size:20.7px;color:#191b23">2</div>
<div class="a t" style="left:1153px;top:978px;width:100px;text-align:right;font-size:20.7px;color:#191b23">2</div>
<div class="a t" style="left:1310px;top:978px;width:100px;text-align:right;font-size:20.7px;color:#a0a3ae">0</div>
<div class="a t" style="left:1456px;top:978px;width:100px;text-align:right;font-size:20.7px;color:#191b23">2</div>
<div class="hr" style="left:14px;top:1050px;width:1571px"></div>
<svg style="left:43px;top:1068px" width="56" height="56" viewBox="0 0 90 90" preserveAspectRatio="none"><use href="#th2"/></svg>
<div class="a t" style="left:111px;top:1069px;font-size:21.4px">taking wonderful pics</div>
<div class="a t g" style="left:110px;top:1097px;font-size:21px">Dec 18, 02 AM</div>
<svg style="left:428px;top:1062px" width="41" height="41" viewBox="0 0 41 41"><circle cx="20.5" cy="20" r="19.7" fill="#f0f1f5"/><rect x="11.5" y="12.2" width="18" height="14.5" rx="1" fill="none" stroke="#9a9ca7" stroke-width="2.4"/><path d="M12.5 24 L15.5 21 L18 23.5 L24 17 L29 21.5" fill="none" stroke="#9a9ca7" stroke-width="2.4" stroke-linejoin="round"/><circle cx="15.5" cy="16.5" r="1.3" fill="#9a9ca7"/></svg>
<div class="a t" style="left:485px;top:1069px;width:140px;text-align:right;font-size:20.7px">66.7%</div>
<div class="a t" style="left:682px;top:1069px;width:100px;text-align:right;font-size:20.7px;color:#191b23">3</div>
<div class="a t" style="left:839px;top:1069px;width:100px;text-align:right;font-size:20.7px;color:#a0a3ae">0</div>
<div class="a t" style="left:996px;top:1069px;width:100px;text-align:right;font-size:20.7px;color:#191b23">3</div>
<div class="a t" style="left:1153px;top:1069px;width:100px;text-align:right;font-size:20.7px;color:#191b23">3</div>
<div class="a t" style="left:1310px;top:1069px;width:100px;text-align:right;font-size:20.7px;color:#a0a3ae">0</div>
<div class="a t" style="left:1456px;top:1069px;width:100px;text-align:right;font-size:20.7px;color:#191b23">3</div>
<div class="hr" style="left:14px;top:1142px;width:1571px"></div>
<svg style="left:43px;top:1160px" width="56" height="56" viewBox="0 0 90 90" preserveAspectRatio="none"><use href="#th3"/></svg>
<div class="a t" style="left:111px;top:1161px;font-size:21.4px">foggy but beautiful</div>
<div class="a t g" style="left:110px;top:1189px;font-size:21px">Dec 14, 03 AM</div>
<svg style="left:428px;top:1154px" width="41" height="41" viewBox="0 0 41 41"><circle cx="20.5" cy="20" r="19.7" fill="#f0f1f5"/><rect x="11.5" y="12.2" width="18" height="14.5" rx="1" fill="none" stroke="#9a9ca7" stroke-width="2.4"/><path d="M12.5 24 L15.5 21 L18 23.5 L24 17 L29 21.5" fill="none" stroke="#9a9ca7" stroke-width="2.4" stroke-linejoin="round"/><circle cx="15.5" cy="16.5" r="1.3" fill="#9a9ca7"/></svg>
<div class="a t" style="left:485px;top:1161px;width:140px;text-align:right;font-size:20.7px">66.7%</div>
<div class="a t" style="left:682px;top:1161px;width:100px;text-align:right;font-size:20.7px;color:#191b23">3</div>
<div class="a t" style="left:839px;top:1161px;width:100px;text-align:right;font-size:20.7px;color:#a0a3ae">0</div>
<div class="a t" style="left:996px;top:1161px;width:100px;text-align:right;font-size:20.7px;color:#191b23">3</div>
<div class="a t" style="left:1153px;top:1161px;width:100px;text-align:right;font-size:20.7px;color:#191b23">3</div>
<div class="a t" style="left:1310px;top:1161px;width:100px;text-align:right;font-size:20.7px;color:#a0a3ae">0</div>
<div class="a t" style="left:1456px;top:1161px;width:100px;text-align:right;font-size:20.7px;color:#191b23">3</div>
<svg style="left:311px;top:1069px" width="23" height="23" viewBox="0 0 24 24"><use href="#em2"/></svg><svg style="left:332px;top:1069px" width="24" height="24" viewBox="0 0 24 24"><use href="#em3"/></svg>
<svg style="left:288px;top:1161px" width="23" height="23" viewBox="0 0 24 24"><use href="#em4"/></svg>
</body></html>
